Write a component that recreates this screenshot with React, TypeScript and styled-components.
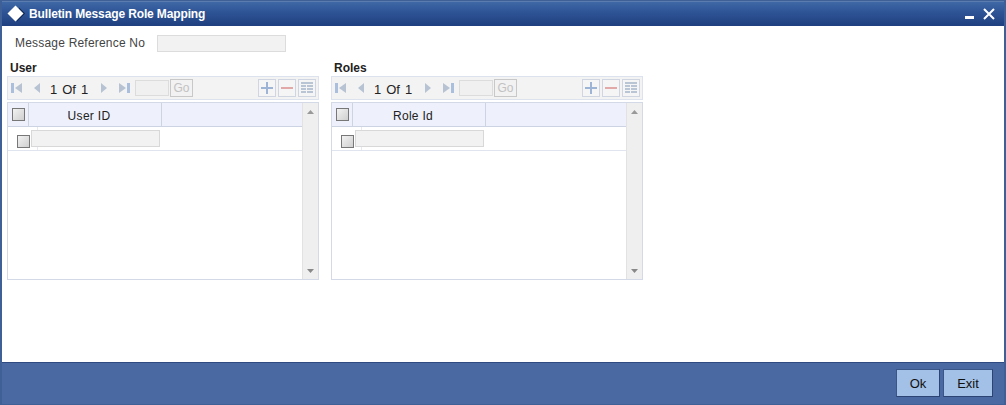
import React from "react";
import styled, { createGlobalStyle } from "styled-components";

const Global = createGlobalStyle`
  html, body { margin: 0; padding: 0; background: #fff; }
  body { font-family: "Liberation Sans", Arial, sans-serif; }
`;

const Win = styled.div`
  width: 1006px; height: 405px; box-sizing: border-box;
  display: flex; flex-direction: column;
  border: 2px solid #3f5f97; border-top-width: 1px; border-bottom-width: 1px;
  background: #fff; overflow: hidden;
`;
const TitleBar = styled.div`
  height: 25px; flex: none; display: flex; align-items: center;
  padding: 0 8px 0 5px; box-sizing: border-box;
  background: linear-gradient(#3f68a6 0, #2f5596 40%, #1f3f7f 100%);
  border-top: 1px solid #5b7cae;
`;
const Title = styled.div`
  margin-left: 2px; color: #fff; font-size: 12px; font-weight: bold; white-space: nowrap; letter-spacing: -0.13px;
`;
const WinControls = styled.div`
  margin-left: auto; display: flex; align-items: center; gap: 6px;
`;
const Body = styled.div`
  flex: 1; display: flex; flex-direction: column; padding: 8px 0 0 5px; min-height: 0;
`;
const RefRow = styled.div`
  display: flex; align-items: center; height: 18px; padding-left: 8px;
`;
const RefLabel = styled.div`
  width: 142px; font-size: 12px; color: #444; letter-spacing: 0.2px;
`;
const RefInput = styled.div`
  width: 129px; height: 17px; box-sizing: border-box;
  background: #f2f2f2; border: 1px solid #dcdcdc;
`;
const Panels = styled.div`
  display: flex; gap: 12px; margin-top: 9px;
`;
const Panel = styled.div`
  width: 312px; display: flex; flex-direction: column;
`;
const PanelTitle = styled.div`
  font-size: 12px; font-weight: bold; color: #222; height: 15px; line-height: 15px; padding-left: 3px;
`;
const Toolbar = styled.div`
  height: 24px; box-sizing: border-box; display: flex; align-items: center;
  background: #f3f3f3; border: 1px solid #dde3ee; padding-left: 2px;
`;
const Pager = styled.div`
  display: flex; gap: 5px; font-size: 13px; color: #222; margin: 2px 10px 0 2px; width: 38px; white-space: nowrap;
`;
const PageBox = styled.div`
  width: 34px; height: 16px; box-sizing: border-box; background: #f0f0f0; border: 1px solid #dcdcdc; margin-left: -1px;
`;
const Go = styled.div`
  width: 23px; height: 18px; box-sizing: border-box; margin-left: 1px;
  border: 1px solid #c8c8c8; background: #f2f2f2; color: #c2c2c2;
  font-size: 12px; line-height: 16px; text-align: center;
`;
const ToolGroup = styled.div`
  margin-left: auto; margin-right: 2px; display: flex; gap: 2px;
`;
const ToolBtn = styled.div`
  width: 18px; height: 18px; box-sizing: border-box; border: 1px solid #cfd6e2;
  background: #f5f5f5; display: flex; align-items: center; justify-content: center;
`;
const Grid = styled.div`
  height: 178px; box-sizing: border-box; margin-top: 2px;
  border: 1px solid #d3d9e6; display: flex;
`;
const Table = styled.div`
  flex: 1; display: flex; flex-direction: column; min-width: 0;
`;
const HeadRow = styled.div`
  height: 24px; flex: none; box-sizing: border-box; display: flex; align-items: stretch;
  background: #eef1fb; border-bottom: 1px solid #ccd3e3;
`;
const HeadCheckCell = styled.div`
  width: 21px; flex: none; box-sizing: border-box; border-right: 1px solid #ccd3e3;
  display: flex; align-items: center; justify-content: center;
`;
const HeadCell = styled.div`
  width: 133px; flex: none; box-sizing: border-box; border-right: 1px solid #ccd3e3; padding: 2px 12px 0 0;
  font-size: 12px; color: #222; letter-spacing: 0.3px; display: flex; align-items: center; justify-content: center;
`;
const BodyRow = styled.div`
  height: 24px; flex: none; box-sizing: border-box; display: flex; align-items: center;
  border-bottom: 1px solid #dfe4ee;
`;
const RowCheckCell = styled.div`
  width: 30px; height: 100%; flex: none; box-sizing: border-box; padding: 5px 0 0 9px;
  display: flex; align-items: center; border-right: 1px solid #e6e9f1;
`;
const Check = styled.div`
  width: 13px; height: 13px; box-sizing: border-box; border: 1px solid #777;
  background: linear-gradient(135deg, #f2f2f2, #cfcfcf);
`;
const CellInput = styled.div`
  width: 129px; height: 17px; box-sizing: border-box; margin-left: -7px;
  background: #f2f2f2; border: 1px solid #d8d8d8;
`;
const Scroll = styled.div`
  width: 16px; flex: none; box-sizing: border-box; background: #efefef;
  border-left: 1px solid #e2e2e2;
  display: flex; flex-direction: column; justify-content: space-between; align-items: center;
  padding: 7px 0 6px;
`;
const Footer = styled.div`
  height: 42px; flex: none; box-sizing: border-box; display: flex; justify-content: flex-end;
  align-items: flex-start; gap: 3px; padding: 6px 11px 0 0;
  background: #4a68a2; border-top: 1px solid #2f4a80;
`;
const FootBtn = styled.div<{ $wide?: boolean }>`
  width: ${(p) => (p.$wide ? "50px" : "44px")}; height: 28px; box-sizing: border-box;
  border: 1px solid #3a5587; border-right-color: #2c4474; border-bottom-color: #2c4474;
  background: #a3c0e6; color: #111; font-size: 13px;
  display: flex; align-items: center; justify-content: center;
`;

const Nav = ({ dir, bar }: { dir: "l" | "r"; bar?: boolean }) => (
  <svg width="14" height="14" viewBox="0 0 14 14" style={{ marginRight: 5 }}>
    {dir === "l" ? (
      <>
        {bar && <rect x="1" y="2" width="3" height="10" fill="#a9bfdc" />}
        <path d={bar ? "M12 2v10L5 7z" : "M11 2v10L5 7z"} fill="#b7c3d3" />
      </>
    ) : (
      <>
        <path d={bar ? "M2 2v10l7-5z" : "M3 2v10l6-5z"} fill="#b7c3d3" />
        {bar && <rect x="10" y="2" width="3" height="10" fill="#a9bfdc" />}
      </>
    )}
  </svg>
);

const GridPanel = ({ title, col }: { title: string; col: string }) => (
  <Panel>
    <PanelTitle>{title}</PanelTitle>
    <Toolbar>
      <Nav dir="l" bar />
      <Nav dir="l" />
      <Pager><span>1</span><span>Of</span><span>1</span></Pager>
      <Nav dir="r" />
      <Nav dir="r" bar />
      <PageBox />
      <Go>Go</Go>
      <ToolGroup>
        <ToolBtn>
          <svg width="14" height="14" viewBox="0 0 14 14"><path d="M6 1h2v5h5v2H8v5H6V8H1V6h5z" fill="#9db4d6" /></svg>
        </ToolBtn>
        <ToolBtn>
          <svg width="14" height="14" viewBox="0 0 14 14"><rect x="1" y="6" width="12" height="2" fill="#e2a9a9" /></svg>
        </ToolBtn>
        <ToolBtn>
          <svg width="14" height="14" viewBox="0 0 14 14">
            <path d="M1 1h12v2H1zM1 4h5v2H1zM7 4h6v2H7zM1 7h5v2H1zM7 7h6v2H7zM1 10h5v2H1zM7 10h6v2H7z" fill="#b9c4d4" />
          </svg>
        </ToolBtn>
      </ToolGroup>
    </Toolbar>
    <Grid>
      <Table>
        <HeadRow>
          <HeadCheckCell><Check /></HeadCheckCell>
          <HeadCell>{col}</HeadCell>
        </HeadRow>
        <BodyRow>
          <RowCheckCell><Check /></RowCheckCell>
          <CellInput />
        </BodyRow>
      </Table>
      <Scroll>
        <svg width="7" height="4" viewBox="0 0 7 4"><path d="M3.5 0L7 4H0z" fill="#999" /></svg>
        <svg width="7" height="4" viewBox="0 0 7 4"><path d="M0 0h7L3.5 4z" fill="#888" /></svg>
      </Scroll>
    </Grid>
  </Panel>
);

export default function App() {
  return (
    <Win>
      <Global />
      <TitleBar>
        <svg width="20" height="18" viewBox="0 0 20 18">
          <path d="M12 2.5l6 6-8 8z" fill="#0b2350" />
          <path d="M8.5 0.5l8 8-8 8-8-8z" fill="#fff" />
        </svg>
        <Title>Bulletin Message Role Mapping</Title>
        <WinControls>
          <svg width="12" height="12" viewBox="0 0 12 12"><rect x="1" y="8" width="9" height="3" fill="#fff" /></svg>
          <svg width="14" height="14" viewBox="0 0 14 14"><path d="M2 2l10 10M12 2L2 12" stroke="#fff" strokeWidth="2" /></svg>
        </WinControls>
      </TitleBar>
      <Body>
        <RefRow>
          <RefLabel>Message Reference No</RefLabel>
          <RefInput />
        </RefRow>
        <Panels>
          <GridPanel title="User" col="User ID" />
          <GridPanel title="Roles" col="Role Id" />
        </Panels>
      </Body>
      <Footer>
        <FootBtn>Ok</FootBtn>
        <FootBtn $wide>Exit</FootBtn>
      </Footer>
    </Win>
  );
}
